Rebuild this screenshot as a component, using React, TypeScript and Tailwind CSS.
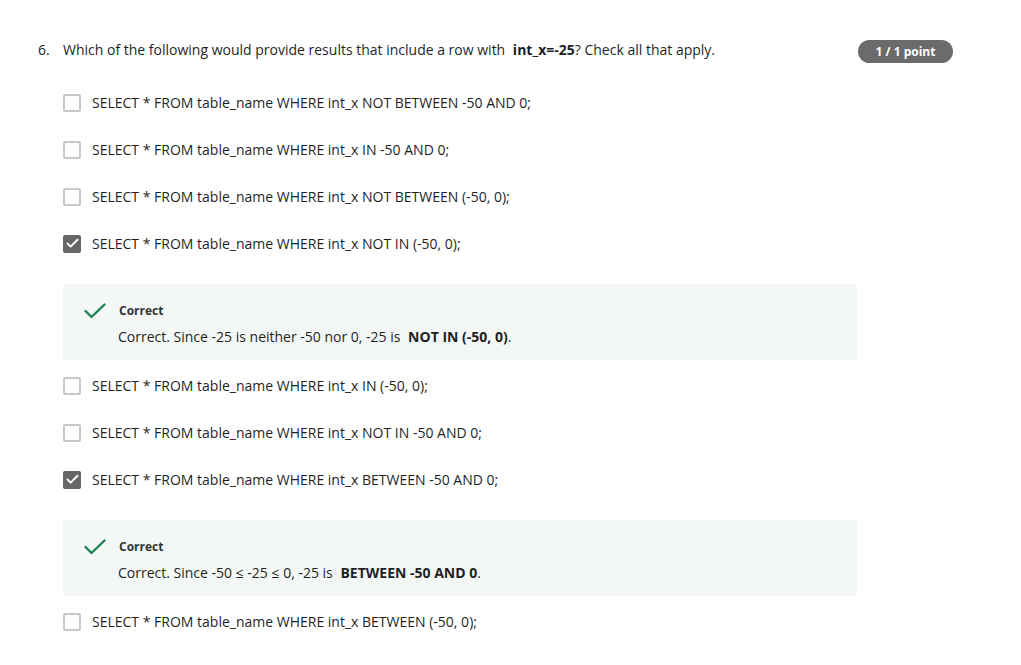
import { Check } from "lucide-react";

type Option = {
  text: string;
  checked?: boolean;
  feedback?: React.ReactNode;
};

const options: Option[] = [
  { text: "SELECT * FROM table_name WHERE int_x NOT BETWEEN -50 AND 0;" },
  { text: "SELECT * FROM table_name WHERE int_x IN -50 AND 0;" },
  { text: "SELECT * FROM table_name WHERE int_x NOT BETWEEN (-50, 0);" },
  {
    text: "SELECT * FROM table_name WHERE int_x NOT IN (-50, 0);",
    checked: true,
    feedback: (
      <>
        Correct. Since -25 is neither -50 nor 0, -25 is <b className="ml-1 font-bold">NOT IN (-50, 0)</b>.
      </>
    )
  },
  { text: "SELECT * FROM table_name WHERE int_x IN (-50, 0);" },
  { text: "SELECT * FROM table_name WHERE int_x NOT IN -50 AND 0;" },
  {
    text: "SELECT * FROM table_name WHERE int_x BETWEEN -50 AND 0;",
    checked: true,
    feedback: (
      <>
        Correct. Since -50 ≤ -25 ≤ 0, -25 is <b className="ml-1 font-bold">BETWEEN -50 AND 0</b>.
      </>
    )
  },
  { text: "SELECT * FROM table_name WHERE int_x BETWEEN (-50, 0);" }
];

function Box({ checked }: { checked?: boolean }) {
  if (checked) {
    return (
      <span className="flex h-[18px] w-[18px] items-center justify-center rounded-[2px] bg-[#666666]">
        <Check className="h-[15px] w-[15px] text-white" strokeWidth={3} />
      </span>
    );
  }
  return <span className="h-[18px] w-[18px] rounded-[2px] border-2 border-[#c8c8c8] bg-white" />;
}

function GreenCheck() {
  return (
    <svg width="22" height="16" viewBox="0 0 22 16" fill="none">
      <polyline
        points="1.5,8 7.5,14 20.5,1.5"
        stroke="#1f8354"
        strokeWidth="2.4"
        strokeLinecap="round"
        strokeLinejoin="round"
      />
    </svg>
  );
}

export default function App() {
  return (
    <div
      className="min-h-[665px] w-[1021px] bg-white pt-10 text-[#1f1f1f]"
      style={{ fontFamily: '"Open Sans", "Liberation Sans", sans-serif' }}
    >
      <div className="flex items-start pl-[38px]">
        <span className="w-[25px] text-[14px] leading-[20px]">6.</span>
        <p className="flex-1 text-[14px] leading-[20px]">
          Which of the following would provide results that include a row with{" "}
          <b className="ml-1 font-bold">int_x=-25</b>? Check all that apply.
        </p>
        <span className="mr-[68px] flex h-[23px] w-[95px] items-center justify-center rounded-full bg-[#6b6b6b] text-[12px] font-bold text-white">
          1 / 1 point
        </span>
      </div>

      <div className="mt-[16px] pl-[63px]">
        {options.map((opt) => (
          <div key={opt.text}>
            <label className="flex h-[47px] items-center gap-[11px]">
              <Box checked={opt.checked} />
              <span className="text-[14px]">{opt.text}</span>
            </label>
            {opt.feedback ? (
              <div className="mb-[2px] mt-[17px] w-[794px] bg-[#f3f8f6] pb-[13px] pl-[21px] pt-[16px]">
                <div className="flex h-[22px] items-center gap-[13px]">
                  <GreenCheck />
                  <span className="text-[12px] font-bold leading-[16px] text-[#333]">Correct</span>
                </div>
                <p className="ml-[34px] mt-[5px] text-[14px] leading-[20px]">{opt.feedback}</p>
              </div>
            ) : null}
          </div>
        ))}
      </div>
    </div>
  );
}
